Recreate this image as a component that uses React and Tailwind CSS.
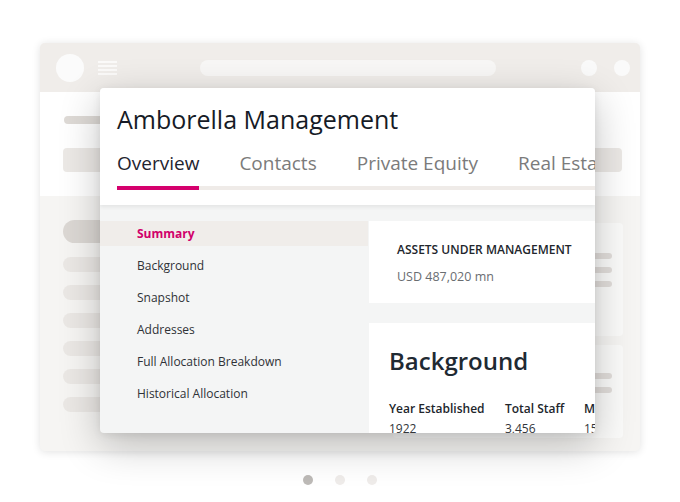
import React from "react";

const font = { fontFamily: '"Open Sans", "Noto Sans", sans-serif' };

function Window() {
  return (
    <div className="w-[600px] h-[408px] rounded-[5px] overflow-hidden shadow-[0_1px_8px_rgba(0,0,0,0.12)] flex flex-col bg-[#f6f5f3]">
      <div className="h-[49px] shrink-0 bg-[#f0edea] flex items-center">
        <div className="ml-[16px] w-[28px] h-[28px] rounded-full bg-[#fbfbfb]" />
        <div className="ml-[14px] w-[19px] flex flex-col gap-[2px]">
          <div className="h-[2px] bg-[#fbfaf9]" />
          <div className="h-[2px] bg-[#fbfaf9]" />
          <div className="h-[2px] bg-[#fbfaf9]" />
          <div className="h-[2px] bg-[#fbfaf9]" />
        </div>
        <div className="ml-[83px] w-[296px] h-[16px] rounded-full bg-[#f8f7f6]" />
        <div className="ml-[85px] w-4 h-4 rounded-full bg-[#fafafa]" />
        <div className="ml-[17px] w-4 h-4 rounded-full bg-[#fafafa]" />
      </div>
      <div className="h-[104px] shrink-0 bg-white flex flex-col">
        <div className="mt-[24px] ml-[24px] w-[200px] h-[8px] rounded-full bg-[#dedad6]" />
        <div className="mt-[24px] ml-[23px] w-[559px] h-[24px] rounded-[4px] bg-[#ece9e6]" />
      </div>
      <div className="flex-1 flex">
        <div className="pl-[23px] pt-[24px] flex flex-col">
          <div className="w-[200px] h-[23px] rounded-full bg-[#dcd8d4]" />
          <div className="mt-[14px] flex flex-col gap-[13px]">
            <div className="w-[200px] h-[15px] rounded-full bg-[#ebe8e5]" />
            <div className="w-[200px] h-[15px] rounded-full bg-[#ebe8e5]" />
            <div className="w-[200px] h-[15px] rounded-full bg-[#ebe8e5]" />
            <div className="w-[200px] h-[15px] rounded-full bg-[#ebe8e5]" />
            <div className="w-[200px] h-[15px] rounded-full bg-[#ebe8e5]" />
            <div className="w-[200px] h-[15px] rounded-full bg-[#ebe8e5]" />
          </div>
        </div>
        <div className="ml-auto pr-[17px] pt-[27px] flex flex-col">
          <div className="w-[230px] h-[113px] rounded-[4px] bg-[#fbfbfa] flex flex-col items-end pr-[11px] pt-[30px] gap-[8px]">
            <div className="w-[60px] h-[6px] rounded-full bg-[#e2dedb]" />
            <div className="w-[60px] h-[6px] rounded-full bg-[#e2dedb]" />
            <div className="w-[60px] h-[6px] rounded-full bg-[#e2dedb]" />
          </div>
          <div className="mt-[9px] w-[230px] h-[93px] rounded-[4px] bg-[#fbfbfa] flex flex-col items-end pr-[11px] pt-[28px] gap-[8px]">
            <div className="w-[60px] h-[6px] rounded-full bg-[#e2dedb]" />
            <div className="w-[60px] h-[6px] rounded-full bg-[#e2dedb]" />
          </div>
        </div>
      </div>
    </div>
  );
}

function Popup() {
  const items = [
    "Background",
    "Snapshot",
    "Addresses",
    "Full Allocation Breakdown",
    "Historical Allocation",
  ];
  return (
    <div className="absolute left-[100px] top-[88px] w-[495px] h-[345px] rounded-[4px] overflow-hidden bg-[#f4f5f5] shadow-[0_12px_40px_rgba(0,0,0,0.24),0_2px_8px_rgba(0,0,0,0.08)] flex flex-col">
      <div className="relative z-10 bg-white pt-[15px] pl-[17px] pb-[15px] shadow-[0_2px_4px_rgba(0,0,0,0.07)] shrink-0">
        <div className="text-[25px] leading-[32px] font-medium text-[#161b26] whitespace-nowrap">
          Amborella Management
        </div>
        <div className="mt-[16px] flex gap-10 text-[19px] leading-[24px] font-medium whitespace-nowrap">
          <span className="shrink-0 text-[#1f2430]">Overview</span>
          <span className="shrink-0 text-[#7b7b7b]">Contacts</span>
          <span className="shrink-0 text-[#7b7b7b]">Private Equity</span>
          <span className="shrink-0 text-[#7b7b7b]">Real Estate</span>
        </div>
        <div className="mt-[11px] h-[4px] flex bg-[#efebe8]">
          <div className="w-[82px] bg-[#d5006d]" />
        </div>
      </div>
      <div className="flex-1 flex min-h-0">
        <div className="w-[268px] shrink-0 pt-[16px] flex flex-col">
          <div className="h-[25px] bg-[#f0edea] pl-[37px] flex items-center text-[12px] font-bold text-[#d1006b]">
            Summary
          </div>
          <div className="mt-[4px] flex flex-col">
            {items.map((t) => (
              <div
                key={t}
                className="h-[32px] pl-[37px] flex items-center text-[12px] text-[#2f3237]"
              >
                {t}
              </div>
            ))}
          </div>
        </div>
        <div className="flex-1 pl-[1px] pt-[16px] flex flex-col whitespace-nowrap overflow-hidden">
          <div className="h-[82px] shrink-0 bg-white pl-[28px] pt-[21px]">
            <div className="text-[12px] leading-[16px] font-semibold text-[#22262c]">
              ASSETS UNDER MANAGEMENT
            </div>
            <div className="mt-[11px] text-[12.5px] leading-[16px] text-[#6a6d71]">
              USD 487,020 mn
            </div>
          </div>
          <div className="mt-[20px] flex-1 bg-white pl-[20px] pt-[22px]">
            <div className="text-[24px] leading-[32px] font-semibold text-[#1f2a33]">
              Background
            </div>
            <div className="mt-[22px] flex text-[12px] leading-[20px]">
              <div className="w-[116px] shrink-0 flex flex-col">
                <span className="font-semibold text-[#22262c]">Year Established</span>
                <span className="text-[#33363a]">1922</span>
              </div>
              <div className="w-[79px] shrink-0 flex flex-col">
                <span className="font-semibold text-[#22262c]">Total Staff</span>
                <span className="text-[#33363a]">3,456</span>
              </div>
              <div className="shrink-0 flex flex-col">
                <span className="font-semibold text-[#22262c]">Managers</span>
                <span className="text-[#33363a]">150</span>
              </div>
            </div>
          </div>
        </div>
      </div>
    </div>
  );
}

export default function App() {
  return (
    <div className="relative w-[680px] h-[502px] bg-white overflow-hidden" style={font}>
      <div className="pt-[43px] pl-[40px]">
        <Window />
      </div>
      <div className="mt-[24px] flex justify-center gap-[22px]">
        <div className="w-[10px] h-[10px] rounded-full bg-[#bdbab7]" />
        <div className="w-[10px] h-[10px] rounded-full bg-[#efecea]" />
        <div className="w-[10px] h-[10px] rounded-full bg-[#efecea]" />
      </div>
      <Popup />
    </div>
  );
}
